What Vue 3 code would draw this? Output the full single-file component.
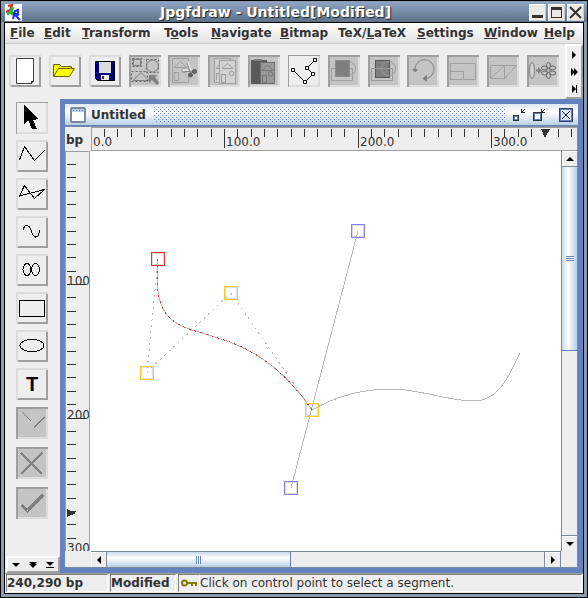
<script setup>
import { ref } from "vue";

const menus = [
  { pre: "", key: "F", post: "ile" },
  { pre: "", key: "E", post: "dit" },
  { pre: "", key: "T", post: "ransform" },
  { pre: "T", key: "o", post: "ols" },
  { pre: "", key: "N", post: "avigate" },
  { pre: "", key: "B", post: "itmap" },
  { pre: "TeX/", key: "L", post: "aTeX" },
  { pre: "", key: "S", post: "ettings" },
  { pre: "", key: "W", post: "indow" },
  { pre: "", key: "H", post: "elp" },
];

// shapes: [tag, attributes]
const grey = "#7f7f7f";
const pale = "#9f9f9f";
const actions = [
  {
    name: "New",
    shapes: [
      ["path", { d: "M7.5 3.5H24.5V26.5L22.5 28.5H7.5Z", fill: "#fff", stroke: "#444" }],
      ["path", { d: "M24.5 26.5H22.5V28.5", stroke: "#222" }],
    ],
  },
  {
    name: "Open",
    shapes: [
      ["path", { d: "M4.5 21.5V9.5H10.5L12.5 11.5H22.5V14", fill: "#ff0", stroke: "#666600" }],
      ["path", { d: "M4.5 21.5L9.5 13.5H25.5L20.5 21.5Z", fill: "#ff0", stroke: "#666600" }],
    ],
  },
  {
    name: "Save",
    shapes: [
      ["path", { d: "M6.5 6.5H25.5V25.5H8.5L6.5 23.5Z", fill: "#00007f", stroke: "#000" }],
      ["rect", { x: 10, y: 7, width: 12, height: 11, fill: "#dcdcdc" }],
      ["rect", { x: 12, y: 20, width: 8, height: 5, fill: "#eee" }],
      ["rect", { x: 13, y: 21, width: 2, height: 3, fill: "#333" }],
    ],
  },
  {
    name: "Select all",
    disabled: true,
    shapes: [
      ["rect", { x: 4.5, y: 4.5, width: 7, height: 6, stroke: grey }],
      ["rect", { x: 3.5, y: 3.5, width: 9, height: 8, stroke: "#666", "stroke-dasharray": "2 2" }],
      ["circle", { cx: 23.5, cy: 11, r: 6, stroke: grey }],
      ["rect", { x: 17.5, y: 4.5, width: 12, height: 13, stroke: "#666", "stroke-dasharray": "2 2" }],
      ["path", { d: "M12 17.5L4 25.5H20Z", stroke: grey }],
      ["rect", { x: 2.5, y: 16.5, width: 16, height: 10, stroke: "#666", "stroke-dasharray": "2 2" }],
      ["path", { d: "M20 20H28L26 22L30 28L28 30L23 25L20 28Z", fill: grey }],
    ],
  },
  {
    name: "Cut",
    disabled: true,
    shapes: [
      ["path", { d: "M20.5 8V3.5H4.5V27.5H20.5V20", stroke: pale }],
      ["path", { d: "M12.5 6.5L6 12.5H18.5Z", stroke: pale }],
      ["rect", { x: 6.5, y: 17.5, width: 4, height: 8, stroke: pale }],
      ["circle", { cx: 16, cy: 15.5, r: 2, stroke: pale }],
      ["path", { d: "M20 7L23 16M15 15L24 16", stroke: "#e5e5e5", "stroke-width": 2 }],
      ["path", { d: "M19 8L22 17H26M15 17L24 16", stroke: grey }],
      ["circle", { cx: 26.5, cy: 16.5, r: 2, fill: "#666", stroke: "#555" }],
      ["circle", { cx: 22.5, cy: 20, r: 2, fill: "#666", stroke: "#555" }],
    ],
  },
  {
    name: "Copy",
    disabled: true,
    shapes: [
      ["rect", { x: 6.5, y: 3.5, width: 16, height: 24, fill: "#d2d2d2", stroke: pale }],
      ["path", { d: "M12 9L8 13.5H11M8.5 25.5V18.5H11", stroke: pale }],
      ["rect", { x: 11.5, y: 5.5, width: 16, height: 23, fill: "#d2d2d2", stroke: pale }],
      ["path", { d: "M19.5 8.5L14 13.5H25Z", stroke: pale }],
      ["circle", { cx: 23.5, cy: 18.5, r: 2.2, stroke: pale }],
      ["rect", { x: 13.5, y: 19.5, width: 4, height: 8, stroke: pale }],
    ],
  },
  {
    name: "Paste",
    disabled: true,
    shapes: [
      ["rect", { x: 3, y: 5, width: 16, height: 24, fill: "#595959" }],
      ["rect", { x: 6, y: 4, width: 8, height: 2, fill: grey }],
      ["rect", { x: 12.5, y: 7.5, width: 14, height: 21, fill: "#9a9a9a", stroke: "#6e6e6e" }],
      ["path", { d: "M19.5 10L14 15.5H25Z", stroke: "#777" }],
      ["circle", { cx: 22.5, cy: 19, r: 2.2, stroke: "#777" }],
      ["rect", { x: 14.5, y: 20.5, width: 4, height: 7, stroke: "#777" }],
    ],
  },
  {
    name: "Edit path",
    pressed: true,
    shapes: [
      ["path", { d: "M5 15L17 27L25 19L19 13L27 5", stroke: "#000" }],
      ["path", { d: "M3.5 13.5h3v3h-3zM15.5 25.5h3v3h-3zM23.5 17.5h3v3h-3zM17.5 11.5h3v3h-3zM25.5 3.5h3v3h-3z", fill: "#fff", stroke: "#000" }],
    ],
  },
  {
    name: "Move to front",
    disabled: true,
    shapes: [
      ["circle", { cx: 20.5, cy: 13.5, r: 7, stroke: pale }],
      ["rect", { x: 3.5, y: 13.5, width: 21, height: 12, stroke: pale }],
      ["rect", { x: 7.5, y: 5.5, width: 14, height: 16, fill: grey, stroke: "#8c8c8c" }],
    ],
  },
  {
    name: "Move to back",
    disabled: true,
    shapes: [
      ["rect", { x: 7.5, y: 5.5, width: 14, height: 17, fill: grey, stroke: "#555" }],
      ["circle", { cx: 20.5, cy: 13.5, r: 7, stroke: "#999" }],
      ["rect", { x: 3.5, y: 13.5, width: 21, height: 12, stroke: "#999" }],
    ],
  },
  {
    name: "Rotate",
    disabled: true,
    shapes: [
      ["path", { d: "M8 14A9.5 9.5 0 1 1 19 23.5", stroke: grey }],
      ["path", { d: "M5 14H11L9 17H8ZM20 20V27L16 24V23Z", fill: grey }],
    ],
  },
  {
    name: "Scale",
    disabled: true,
    shapes: [
      ["rect", { x: 3.5, y: 8.5, width: 25, height: 16, stroke: pale }],
      ["rect", { x: 3.5, y: 16.5, width: 13, height: 8, stroke: pale }],
    ],
  },
  {
    name: "Shear",
    disabled: true,
    shapes: [
      ["rect", { x: 3.5, y: 10.5, width: 14, height: 13, stroke: pale }],
      ["path", { d: "M3.5 23.5L17.5 10.5H29.5L17.5 23.5", stroke: pale }],
    ],
  },
  {
    name: "Convert to path",
    disabled: true,
    shapes: [
      ["ellipse", { cx: 5, cy: 15.5, rx: 2.5, ry: 8, fill: "#d2d2d2", stroke: grey }],
      ["path", { d: "M9 15.5H12", stroke: grey, "stroke-width": 2 }],
      ["path", { d: "M11 12L15 15.5L11 19Z", fill: grey }],
      ["ellipse", { cx: 21.5, cy: 10.5, rx: 2, ry: 3, stroke: "#666" }],
      ["ellipse", { cx: 21.5, cy: 20.5, rx: 2, ry: 3, stroke: "#666" }],
      ["ellipse", { cx: 17.5, cy: 13, rx: 3, ry: 2, stroke: "#666" }],
      ["ellipse", { cx: 25.5, cy: 13, rx: 3, ry: 2, stroke: "#666" }],
      ["ellipse", { cx: 17.5, cy: 18, rx: 3, ry: 2, stroke: "#666" }],
      ["ellipse", { cx: 25.5, cy: 18, rx: 3, ry: 2, stroke: "#666" }],
      ["circle", { cx: 21.5, cy: 15.5, r: 2, fill: "#bbb", stroke: "#666" }],
    ],
  },
];

const tools = [
  {
    name: "Select",
    pressed: true,
    shapes: [["path", { d: "M8 3V22L12 18L16 27H21L17 18L23 17Z", fill: "#000" }]],
  },
  { name: "Open line path", shapes: [["path", { d: "M3.5 20L8.5 6.5L18.5 20.5L28.5 10.5", stroke: "#000" }]] },
  { name: "Closed line path", shapes: [["path", { d: "M3.5 18L8.5 7.5L18.5 20.5L28.5 11.5Z", stroke: "#000" }]] },
  { name: "Open curve path", shapes: [["path", { d: "M7.5 14C8 8 13 8 15 14C17 23 23 24 23.5 14", stroke: "#000" }]] },
  {
    name: "Closed curve path",
    shapes: [
      ["ellipse", { cx: 11, cy: 15.5, rx: 4, ry: 6, stroke: "#000" }],
      ["ellipse", { cx: 19.5, cy: 15.5, rx: 4, ry: 6, stroke: "#000" }],
    ],
  },
  { name: "Rectangle", shapes: [["rect", { x: 3.5, y: 8.5, width: 25, height: 16, stroke: "#000" }]] },
  { name: "Ellipse", shapes: [["ellipse", { cx: 16, cy: 15.5, rx: 12, ry: 6, stroke: "#000" }]] },
  { name: "Text", letter: "T", shapes: [] },
  { name: "Gap", disabled: true, shapes: [["path", { d: "M6 5L15 14M18 20.5L28.5 10", stroke: grey }]] },
  { name: "Abandon", disabled: true, shapes: [["path", { d: "M5 6L26 27M26 6L5 27", stroke: grey, "stroke-width": 2 }]] },
  { name: "Finish", disabled: true, shapes: [["path", { d: "M5.5 18L11.5 23.5L27 8", stroke: grey, "stroke-width": 3 }]] },
];

// a tick every 10bp, one label every 100bp
const step = 13.35;
const ticks = Array.from({ length: 120 }, (_, i) => ({
  pos: Math.floor((i + 1) * step),
  major: (i + 1) % 10 === 0,
}));
const labels = [0, 100, 200, 300].map((n) => ({
  pos: Math.floor((n / 10) * step),
  value: n,
}));

// control points on the canvas
const points = ref([
  { x: 60, y: 101, color: "#ff2a2a" },
  { x: 49, y: 215, color: "#ffcc22" },
  { x: 133, y: 135, color: "#ffcc22" },
  { x: 260, y: 73, color: "#8080ff" },
  { x: 214, y: 252, color: "#ffcc22" },
  { x: 193, y: 330, color: "#8080ff" },
]);
</script>

<template>
  <div class="window">
    <header class="titlebar">
      <svg class="logo" width="17" height="17" viewBox="0 0 17 17">
        <rect width="17" height="17" fill="#fff" />
        <path d="M3 2L7 1L5 6L1 8" fill="none" stroke="#e02020" stroke-width="2" />
        <path d="M8 3L6 7L8 11M6 8L2 10" fill="none" stroke="#20c030" stroke-width="3" />
        <path d="M8 15L10 7L13 6L13 9L10 11L12 13L15 16M8 9L14 11" fill="none" stroke="#2030e0" stroke-width="2" />
      </svg>
      <h1>Jpgfdraw - Untitled[Modified]</h1>
      <div class="window-buttons">
        <button type="button" aria-label="Minimize">
          <svg width="17" height="17"><rect x="3" y="11" width="11" height="3" fill="#333" /></svg>
        </button>
        <button type="button" aria-label="Maximize">
          <svg width="17" height="17">
            <rect x="3.5" y="3.5" width="10" height="10" fill="none" stroke="#333" />
            <rect x="3" y="3" width="11" height="3" fill="#333" />
          </svg>
        </button>
        <button type="button" aria-label="Close">
          <svg width="17" height="17"><path d="M3 3L14 14M14 3L3 14" stroke="#333" stroke-width="2" /></svg>
        </button>
      </div>
    </header>

    <div class="body">
      <nav class="menubar">
        <button v-for="m in menus" :key="m.key" type="button">{{ m.pre }}<u>{{ m.key }}</u>{{ m.post }}</button>
      </nav>

      <div class="toolbar">
        <div class="actions">
          <button
            v-for="a in actions"
            :key="a.name"
            type="button"
            class="tool"
            :class="{ pressed: a.pressed }"
            :disabled="a.disabled"
            :aria-label="a.name"
          >
            <svg width="32" height="32" fill="none">
              <component :is="s[0]" v-for="(s, i) in a.shapes" :key="i" v-bind="s[1]" />
            </svg>
          </button>
        </div>
        <div class="scroller">
          <button type="button" aria-label="Scroll right">
            <svg width="12" height="8"><path d="M4 0L8 4L4 8Z" /></svg>
          </button>
          <button type="button" aria-label="Page right">
            <svg width="12" height="8"><path d="M3 0L6 3V0L10 4L6 8V5L3 8Z" /></svg>
          </button>
          <button type="button" aria-label="Scroll to end">
            <svg width="12" height="8"><path d="M4 0L8 4L4 8ZM8 0H9V8H8Z" /></svg>
          </button>
        </div>
      </div>

      <main class="workspace">
        <aside class="sidebar">
          <div class="tools">
            <button
              v-for="t in tools"
              :key="t.name"
              type="button"
              class="tool"
              :class="{ pressed: t.pressed }"
              :disabled="t.disabled"
              :aria-label="t.name"
            >
              <span v-if="t.letter" class="letter">{{ t.letter }}</span>
              <svg v-else width="32" height="32" fill="none" shape-rendering="crispEdges">
                <component :is="s[0]" v-for="(s, i) in t.shapes" :key="i" v-bind="s[1]" />
              </svg>
            </button>
          </div>
          <div class="scroller across">
            <button type="button" aria-label="Scroll down">
              <svg width="8" height="8"><path d="M0 2H8L4 6Z" /></svg>
            </button>
            <button type="button" aria-label="Page down">
              <svg width="8" height="8"><path d="M0 1H8L6 3H8L4 7L0 3H2Z" /></svg>
            </button>
            <button type="button" aria-label="Scroll to bottom">
              <svg width="8" height="8"><path d="M0 1H8L4 5ZM0 6H8V7H0Z" /></svg>
            </button>
          </div>
        </aside>

        <section class="frame">
          <div class="frame-title">
            <svg width="16" height="16">
              <rect x="1" y="1" width="14" height="14" rx="1" fill="#fff" stroke="#7a8a99" stroke-width="2" />
              <rect x="2" y="2" width="12" height="3" fill="#b8cfe5" />
              <path d="M3 3.5H14" stroke="#6382bf" stroke-dasharray="1 2" />
            </svg>
            <h2>Untitled</h2>
            <div class="bumps"></div>
            <button type="button" aria-label="Iconify">
              <svg width="16" height="16" shape-rendering="crispEdges">
                <path d="M3 8.5H9M3.5 8V14M3 13.5H9M8.5 8V14" stroke="#333" />
                <rect x="4.5" y="9.5" width="3" height="3" fill="#fff" stroke="#6382bf" />
                <path d="M11.5 2V5.5H15M11.5 5.5L15 2" fill="none" stroke="#222" />
              </svg>
            </button>
            <button type="button" aria-label="Restore">
              <svg width="16" height="16" shape-rendering="crispEdges">
                <rect x="2.5" y="5.5" width="8" height="8" fill="#fff" stroke="#333" />
                <rect x="3.5" y="6.5" width="6" height="6" fill="none" stroke="#6382bf" />
                <path d="M10.5 2V5.5H14M10.5 5.5L14 2" fill="none" stroke="#222" />
              </svg>
            </button>
            <button type="button" class="close" aria-label="Close document">
              <svg width="14" height="14" shape-rendering="crispEdges">
                <rect x="1.5" y="1.5" width="11" height="11" fill="#dce8f4" stroke="#6382bf" />
                <rect x=".5" y=".5" width="13" height="13" fill="none" stroke="#333f66" />
                <path d="M3 3L11 11M11 3L3 11" stroke="#222" />
              </svg>
            </button>
          </div>

          <div class="sheet">
            <div class="unit">bp</div>
            <div class="ruler top">
              <svg shape-rendering="crispEdges">
                <path v-for="t in ticks" :key="t.pos" :d="`M${t.pos - 0.5} 1V${t.major ? 20 : 9}`" stroke="#333" />
                <path d="M449 1H458L453 10Z" fill="#333" />
                <text v-for="l in labels" :key="l.pos" :x="l.pos + 1" y="18">{{ l.value }}.0</text>
              </svg>
            </div>
            <div class="ruler left">
              <svg shape-rendering="crispEdges">
                <path v-for="t in ticks" :key="t.pos" :d="`M1 ${t.pos - 0.5}H${t.major ? 20 : 10}`" stroke="#333" />
                <path d="M1 357V365L10 361Z" fill="#333" />
                <text v-for="l in labels.slice(1)" :key="l.pos" x="1" :y="l.pos">{{ l.value }}</text>
              </svg>
            </div>

            <div class="canvas">
              <svg fill="none" shape-rendering="crispEdges">
                <g stroke="#ddd">
                  <rect v-for="(p, i) in points" :key="i" :x="p.x + 1.5" :y="p.y + 1.5" width="11" height="11" />
                </g>
                <g stroke="#bbb">
                  <path d="M67 108L56 221M56 221L140 142M140 142L221 259" stroke-dasharray="2 4" />
                  <path d="M267 80L200 337" />
                  <path d="M67 108C56 221 140 141 221 259" />
                  <path d="M221 259C244 246 271 238 299 238C329 238 357 250 383 250C406 250 417 228 429 202" />
                </g>
                <path
                  d="M67 108C56 221 140 141 221 259"
                  stroke="#ff2a2a"
                  stroke-dasharray="2 4"
                />
                <rect
                  v-for="(p, i) in points"
                  :key="i"
                  :x="p.x + 0.5"
                  :y="p.y + 0.5"
                  width="13"
                  height="13"
                  :stroke="p.color"
                />
              </svg>
            </div>

            <div class="scrollbar vertical">
              <button type="button" aria-label="Up"><svg width="8" height="4"><path d="M0 4L4 0L8 4Z" /></svg></button>
              <div class="track"><div class="thumb"><i></i></div></div>
              <button type="button" aria-label="Down"><svg width="8" height="4"><path d="M0 0L4 4L8 0Z" /></svg></button>
            </div>
            <div class="scrollbar horizontal">
              <button type="button" aria-label="Left"><svg width="4" height="8"><path d="M4 0L0 4L4 8Z" /></svg></button>
              <div class="track"><div class="thumb"><i></i></div></div>
              <button type="button" aria-label="Right"><svg width="4" height="8"><path d="M0 0L4 4L0 8Z" /></svg></button>
            </div>
          </div>
        </section>
      </main>

      <footer class="status">
        <span class="cell position">240,290 bp</span>
        <span class="cell modified">Modified</span>
        <span class="cell lock">
          <svg width="16" height="8" fill="none" stroke="#808000" stroke-width="2">
            <circle cx="3.5" cy="4" r="2.5" />
            <path d="M6 4H16M11 4V7M15 4V7" />
          </svg>
        </span>
        <span class="cell message">Click on control point to select a segment.</span>
      </footer>
    </div>
  </div>
</template>

<style>
body {
  margin: 0;
}
</style>

<style scoped>
* {
  box-sizing: border-box;
}

.window {
  display: flex;
  flex-direction: column;
  height: 100vh;
  padding: 1px 3px 3px;
  border: 1px solid #000;
  background: #8a9cb0;
  color: #333;
  font-family: "DejaVu Sans", sans-serif;
  font-size: 12px;
  line-height: 16px;
}

button {
  display: flex;
  align-items: center;
  justify-content: center;
  padding: 0;
  border: 0;
  background: none;
  color: #333;
  font: inherit;
}

svg {
  display: block;
  flex: none;
}

h1,
h2 {
  margin: 0;
  font-weight: bold;
}

/* outer window title */
.titlebar {
  display: flex;
  align-items: center;
  height: 20px;
  margin: 0 -3px;
  padding: 0 3px 0 4px;
  background: linear-gradient(#8ea4c4, #5e7388);
}

.titlebar h1 {
  flex: 1;
  color: #fff;
  font-size: 14px;
  line-height: 18px;
  text-align: center;
  text-shadow: 1px 1px 1px #222;
}

.window-buttons {
  display: flex;
  gap: 2px;
}

.window-buttons button {
  width: 17px;
  height: 17px;
  background: #eceae6;
  box-shadow: inset 1px 1px #fff, inset -1px -1px #ccc;
}

.body {
  display: flex;
  flex: 1;
  flex-direction: column;
  min-height: 0;
  border: 1px solid #000;
  background: #eee;
}

/* menu bar */
.menubar {
  display: grid;
  grid-template-columns: 34fr 38fr 82fr 47fr 69fr 58fr 79fr 67fr 60fr 39fr;
  height: 21px;
  padding-left: 5px;
  border-bottom: 1px solid #ccc;
  background: linear-gradient(#fff, #e4e4e4);
}

.menubar button {
  display: block;
  min-width: 0;
  margin-right: 5px;
  overflow: hidden;
  font-weight: bold;
  text-align: left;
  white-space: nowrap;
}

/* toolbar */
.toolbar {
  display: flex;
  height: 55px;
}

.actions {
  display: flex;
  flex: 1;
  align-items: center;
  justify-content: space-between;
  padding: 0 6px 2px 4px;
}

.tool {
  width: 32px;
  height: 32px;
  background: #eee;
  box-shadow: inset 2px 2px #dcdcdc, inset -2px -2px #9f9f9f;
}

.tool.pressed {
  box-shadow: inset 1px 1px #9f9f9f, inset -2px -2px #dcdcdc;
}

.tool:disabled {
  background: #c4c4c4;
  box-shadow: inset 2px 2px #9f9f9f, inset -2px -2px #dcdcdc;
}

.letter {
  color: #000;
  font: bold 20px/32px "Liberation Sans", sans-serif;
}

.scroller {
  display: flex;
  flex-direction: column;
  justify-content: space-around;
  width: 18px;
  border: 2px solid;
  border-color: #fff #9f9f9f #9f9f9f #fff;
}

.scroller.across {
  flex-direction: row;
  width: auto;
  height: 17px;
  margin-left: 1px;
}

/* tool column and document */
.workspace {
  display: flex;
  flex: 1;
  min-height: 0;
}

.sidebar {
  display: flex;
  flex: none;
  flex-direction: column;
  justify-content: space-between;
  width: 55px;
}

.tools {
  display: flex;
  flex-direction: column;
  gap: 6px;
  padding: 3px 0 0 11px;
}

.tools .tool:disabled {
  margin-top: 1px;
}

.tools .tool:disabled + .tool:disabled {
  margin-top: 2px;
}

.frame {
  display: flex;
  flex: 1;
  flex-direction: column;
  min-width: 0;
  border: 5px solid #6382bf;
}

.frame-title {
  display: flex;
  align-items: center;
  gap: 5px;
  height: 22px;
  padding: 0 5px;
  border-bottom: 1px solid #6382bf;
  background: linear-gradient(#dde8f3, #fff 40%, #b8cfe5);
}

.frame-title h2 {
  font-size: 12px;
  line-height: 16px;
}

.frame-title .close {
  margin-left: 7px;
}

.bumps {
  flex: 1;
  height: 15px;
  margin-left: 3px;
  background-image: conic-gradient(at 1px 1px, transparent 75%, #6382bf 0),
    conic-gradient(at 1px 1px, transparent 75%, #6382bf 0);
  background-position: 0 0, 2px 2px;
  background-size: 4px 4px;
}

.sheet {
  display: grid;
  flex: 1;
  grid-template-rows: 24px 1fr 16px;
  grid-template-columns: 26px 1fr 16px;
  min-height: 0;
  border: 1px solid #7a8a99;
  border-width: 1px 1px 1px 0;
  background: #eee;
}

.unit {
  padding: 5px 0 0 1px;
  font-weight: bold;
}

.ruler {
  overflow: hidden;
}

.ruler svg,
.canvas svg {
  width: 100%;
  height: 100%;
}

.ruler text {
  fill: #333;
  font-size: 12px;
}

.ruler.top {
  grid-column: 2 / 4;
  border: 1px solid #9f9f9f;
  border-right: 0;
}

.ruler.left {
  margin-right: 1px;
  border: 1px solid #9f9f9f;
  border-bottom: 0;
}

.canvas {
  min-width: 0;
  min-height: 0;
  overflow: hidden;
  margin-left: -1px;
  padding-left: 1px;
  background: #fff;
}

/* scrollbars */
.scrollbar {
  display: flex;
  border: 1px solid #7a8a99;
}

.scrollbar.vertical {
  flex-direction: column;
  border-width: 0 0 0 1px;
}

.scrollbar.horizontal {
  grid-column: 2;
  border-width: 1px 1px 0 0;
}

.scrollbar button {
  flex: none;
  width: 15px;
  height: 15px;
  background: #eee;
  box-shadow: inset 1px 1px #fff;
}

.track {
  display: flex;
  flex: 1;
  border: 1px solid #7a8a99;
  background: #eee;
}

.vertical .track {
  flex-direction: column;
  border-width: 1px 0;
}

.horizontal .track {
  border-width: 0 1px;
}

.thumb {
  display: flex;
  align-items: center;
  justify-content: center;
}

.vertical .thumb {
  height: 50%;
  border-bottom: 1px solid #6382bf;
  background: linear-gradient(90deg, #c8daec, #fff 40%, #b8cfe5);
}

.horizontal .thumb {
  width: 42%;
  border-right: 1px solid #6382bf;
  background: linear-gradient(#c8daec, #fff 40%, #b8cfe5);
}

.thumb i {
  width: 8px;
  height: 5px;
  border: solid #6382bf;
  border-width: 1px 0;
  background: linear-gradient(#fff 0 1px, #6382bf 1px 2px, #fff 2px 3px);
}

.horizontal .thumb i {
  width: 5px;
  height: 8px;
  border-width: 0 1px;
  background: linear-gradient(90deg, #fff 0 1px, #6382bf 1px 2px, #fff 2px 3px);
}

/* status bar */
.status {
  display: flex;
  gap: 2px;
  height: 20px;
  padding: 0 1px 1px;
  border-top: 1px solid #9f9f9f;
}

.cell {
  overflow: hidden;
  border: 1px solid;
  border-color: #808080 #fff #fff #808080;
  white-space: nowrap;
}

.position,
.modified {
  font-weight: bold;
}

.position {
  width: 102px;
}

.modified {
  width: 66px;
}

.lock {
  display: flex;
  align-items: center;
  justify-content: center;
  width: 22px;
}

.message {
  flex: 1;
  margin-left: -2px;
  border-left: 0;
}
</style>
